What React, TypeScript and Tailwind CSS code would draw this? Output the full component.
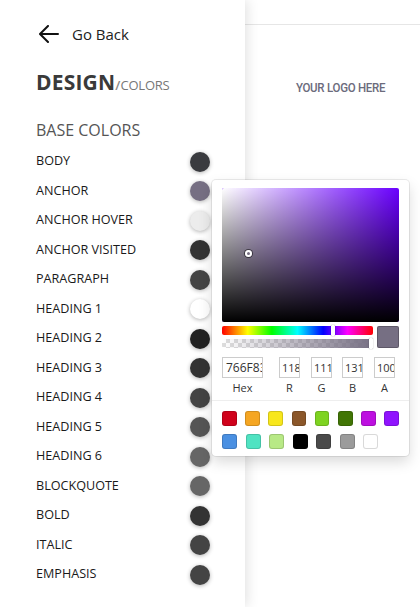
import React from "react";

const rows: [string, string][] = [
  ["BODY", "#3a3b3f"],
  ["ANCHOR", "#766f83"],
  ["ANCHOR HOVER", "#ececec"],
  ["ANCHOR VISITED", "#333333"],
  ["PARAGRAPH", "#444444"],
  ["HEADING 1", "#ffffff"],
  ["HEADING 2", "#222222"],
  ["HEADING 3", "#333333"],
  ["HEADING 4", "#444444"],
  ["HEADING 5", "#555555"],
  ["HEADING 6", "#666666"],
  ["BLOCKQUOTE", "#666666"],
  ["BOLD", "#333333"],
  ["ITALIC", "#444444"],
  ["EMPHASIS", "#444444"],
];

const sw1 = ["#d0021b", "#f5a623", "#f8e71c", "#8b572a", "#7ed321", "#417505", "#bd10e0", "#9013fe"];
const sw2 = ["#4a90e2", "#50e3c2", "#b8e986", "#000000", "#4a4a4a", "#9b9b9b", "#ffffff"];

function Picker() {
  return (
    <div className="absolute z-30 left-[212px] top-[180px] w-[197px] bg-white rounded-[4px] shadow-[0_0_0_1px_rgba(0,0,0,0.08),0_6px_14px_rgba(0,0,0,0.15)]">
      <div className="px-[10px] pt-[8px]">
        <div className="relative h-[134px] rounded-[2px] overflow-hidden bg-[#6a00ff]">
          <div className="absolute inset-0 bg-gradient-to-r from-white to-transparent" />
          <div className="absolute inset-0 bg-gradient-to-t from-black to-transparent" />
          <div className="absolute left-[23px] top-[62px] w-[7px] h-[7px] rounded-full border-2 border-white shadow-[0_0_0_1px_rgba(0,0,0,0.5)]" />
        </div>
        <div className="flex gap-[4px] mt-[4px]">
          <div className="flex-1 flex flex-col gap-[4px]">
            <div className="relative h-[9px] rounded-[2px] bg-[linear-gradient(to_right,#f00_0%,#ff0_17%,#0f0_33%,#0ff_50%,#00f_67%,#f0f_83%,#f00_100%)]">
              <div className="absolute left-[109px] top-[-1px] w-[4px] h-[11px] bg-white rounded-[1px] shadow-[0_0_1px_rgba(0,0,0,0.6)]" />
            </div>
            <div className="relative h-[9px] rounded-[2px] bg-[repeating-conic-gradient(#ddd_0%_25%,#fff_0%_50%)] bg-[length:8px_8px]">
              <div className="absolute inset-0 rounded-[2px] bg-gradient-to-r from-transparent to-[#766f83]" />
              <div className="absolute right-[0px] top-[-1px] w-[4px] h-[11px] bg-white rounded-[1px] shadow-[0_0_1px_rgba(0,0,0,0.6)]" />
            </div>
          </div>
          <div className="w-[22px] h-[22px] rounded-[2px] bg-[#766f83] shadow-[inset_0_0_0_1px_rgba(0,0,0,0.2)]" />
        </div>
        <div className="flex mt-[9px] text-[11px] text-[#333] font-['Open_Sans',sans-serif]">
          <div className="w-[41px] flex flex-col items-center">
            <div className="w-[41px] h-[21px] border border-[#ccc] overflow-hidden pl-[3px] leading-[19px] text-[12px] whitespace-nowrap">766F83</div>
            <div className="mt-[3px] leading-[14px]">Hex</div>
          </div>
          <div className="w-[21px] ml-[16px] flex flex-col items-center">
            <div className="w-[21px] h-[21px] border border-[#ccc] overflow-hidden pl-[2px] leading-[19px] whitespace-nowrap">118</div>
            <div className="mt-[3px] leading-[14px]">R</div>
          </div>
          <div className="w-[21px] ml-[11px] flex flex-col items-center">
            <div className="w-[21px] h-[21px] border border-[#ccc] overflow-hidden pl-[2px] leading-[19px] whitespace-nowrap">111</div>
            <div className="mt-[3px] leading-[14px]">G</div>
          </div>
          <div className="w-[21px] ml-[10px] flex flex-col items-center">
            <div className="w-[21px] h-[21px] border border-[#ccc] overflow-hidden pl-[2px] leading-[19px] whitespace-nowrap">131</div>
            <div className="mt-[3px] leading-[14px]">B</div>
          </div>
          <div className="w-[21px] ml-[11px] flex flex-col items-center">
            <div className="w-[21px] h-[21px] border border-[#ccc] overflow-hidden pl-[2px] leading-[19px] whitespace-nowrap">100</div>
            <div className="mt-[3px] leading-[14px]">A</div>
          </div>
        </div>
      </div>
      <div className="border-t border-[#eee] mt-[5px] px-[10px] pt-[10px] pb-[7px]">
        <div className="flex gap-[8.5px]">
          {sw1.map((c, i) => (
            <div key={i} className="w-[15px] h-[15px] rounded-[3px] shadow-[inset_0_0_0_1px_rgba(0,0,0,0.15)]" style={{ background: c }} />
          ))}
        </div>
        <div className="flex gap-[8.5px] mt-[8px]">
          {sw2.map((c, i) => (
            <div key={i} className="w-[15px] h-[15px] rounded-[3px] shadow-[inset_0_0_0_1px_rgba(0,0,0,0.15)]" style={{ background: c }} />
          ))}
        </div>
      </div>
    </div>
  );
}

export default function App() {
  return (
    <div className="relative w-[420px] h-[607px] overflow-hidden bg-white font-['Open_Sans',sans-serif] flex">
      <div className="relative z-10 w-[245px] h-full bg-white shadow-[2px_0_12px_rgba(0,0,0,0.12)] pl-[36px] shrink-0">
        <div className="flex items-center h-[24px] mt-[22px]">
          <svg width="20" height="18" viewBox="0 0 20 18" className="ml-[3px]" fill="none" stroke="#111" strokeWidth="2" strokeLinecap="round" strokeLinejoin="round">
            <path d="M19 9H2M9 1L1 9l8 8" />
          </svg>
          <span className="ml-[13px] text-[15px] text-[#222]">Go Back</span>
        </div>
        <div className="mt-[26px] flex items-baseline leading-none">
          <span className="text-[21px] font-bold text-[#3a3a3a] tracking-[0.2px]">DESIGN</span>
          <span className="text-[13px] text-[#888] font-semibold">/</span>
          <span className="text-[13px] text-[#777] tracking-[-0.2px]">COLORS</span>
        </div>
        <div className="mt-[27px] text-[16px] text-[#555] leading-[20px]">BASE COLORS</div>
        <div className="mt-[7px] flex flex-col">
          {rows.map(([name, color]) => (
            <div key={name} className="flex items-center h-[29.5px]">
              <span className="text-[12.6px] text-[#1a1a1a] flex-1">{name}</span>
              <span
                className="w-[20px] h-[20px] rounded-full mr-[35px] shadow-[0_1px_4px_rgba(0,0,0,0.3)]"
                style={{ background: color }}
              />
            </div>
          ))}
        </div>
      </div>
      <div className="flex-1 flex flex-col">
        <div className="h-[25px] border-b border-[#e6e6e6] shrink-0" />
        <div className="flex justify-center pt-[54px] pl-[16px]">
          <span className="font-['Roboto',sans-serif] text-[12.5px] font-medium text-[#6b6b7c] tracking-[-0.3px] [transform:scaleX(0.92)]">YOUR LOGO HERE</span>
        </div>
      </div>
      <Picker />
    </div>
  );
}
